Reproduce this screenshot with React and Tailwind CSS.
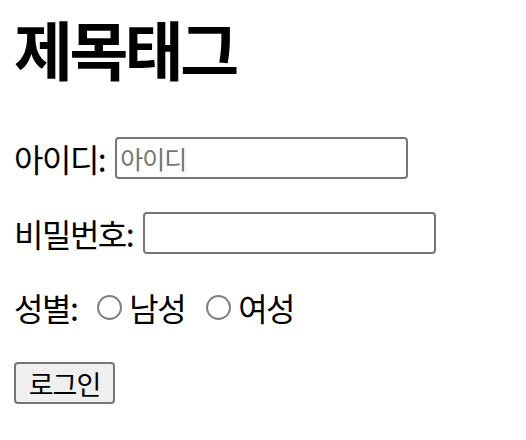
export default function App() {
  return (
    <div className="min-h-[440px] bg-white px-[14px] text-black font-['Noto_Sans_CJK_KR','Noto_Sans',sans-serif]">
      <h1 className="pt-[15px] text-[64px] leading-[64px] font-bold tracking-[-3.5px]">제목태그</h1>

      <form className="mt-[58px] flex flex-col">
        {/* 아이디 */}
        <div className="flex h-[42px] items-center gap-[10px]">
          <label className="text-[32px] leading-none tracking-[-1.5px]">아이디:</label>
          <input
            type="text"
            placeholder="아이디"
            className="h-[42px] w-[293px] rounded-[4px] border-2 border-[#767676] bg-white px-[3px] text-[25px] tracking-[-1px] text-black placeholder-[#757575] outline-none"
          />
        </div>

        {/* 비밀번호 */}
        <div className="mt-[33px] flex h-[42px] items-center gap-[10px]">
          <label className="text-[32px] leading-none tracking-[-1.5px]">비밀번호:</label>
          <input
            type="password"
            className="h-[42px] w-[293px] rounded-[4px] border-2 border-[#767676] bg-white px-[3px] text-[25px] outline-none"
          />
        </div>

        {/* 성별 */}
        <div className="mt-[38px] flex h-[30px] items-center text-[32px] leading-none tracking-[-1.5px]">
          <span>성별:</span>
          <input
            type="radio"
            name="gender"
            className="ml-[20px] mr-[7px] h-[25px] w-[25px] shrink-0 appearance-none rounded-full border-2 border-[#808080] bg-white"
          />
          <span>남성</span>
          <input
            type="radio"
            name="gender"
            className="ml-[21px] mr-[7px] h-[25px] w-[25px] shrink-0 appearance-none rounded-full border-2 border-[#808080] bg-white"
          />
          <span>여성</span>
        </div>

        {/* 로그인 */}
        <div className="mt-[40px]">
          <button
            type="submit"
            className="h-[42px] w-[101px] rounded-[4px] border-2 border-[#767676] bg-[#efefef] text-[27px] leading-none tracking-[-1px] text-black"
          >
            로그인
          </button>
        </div>
      </form>
    </div>
  );
}
